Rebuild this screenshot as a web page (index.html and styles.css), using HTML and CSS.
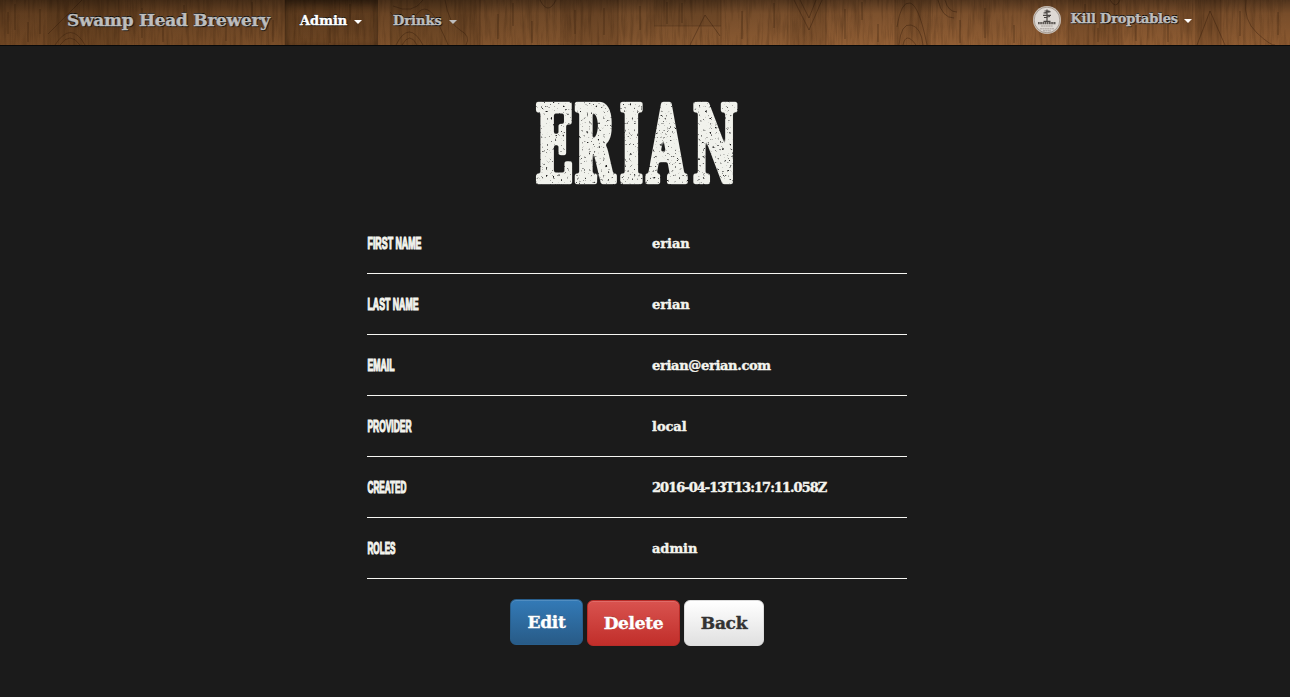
FILE: index.html
```html
<!DOCTYPE html>
<html lang="en">
<head>
<meta charset="utf-8">
<title>Swamp Head Brewery</title>
<link rel="stylesheet" href="styles.css">
</head>
<body>
<header class="navbar">
  <svg class="wood" width="1290" height="45" aria-hidden="true">
    <defs>
      <linearGradient id="tone"><stop offset="0" stop-color="#704724"/><stop offset=".22" stop-color="#794e29"/><stop offset=".5" stop-color="#855730"/><stop offset=".68" stop-color="#925f35"/><stop offset="1" stop-color="#8c5a31"/></linearGradient>
      <linearGradient id="shade" x2="0" y2="1"><stop offset="0" stop-opacity=".42"/><stop offset=".3" stop-opacity=".15"/><stop offset="1" stop-opacity="0"/></linearGradient>
      <filter id="grain" x="0" y="0" width="100%" height="100%" color-interpolation-filters="sRGB"><feTurbulence type="fractalNoise" baseFrequency=".3 .025" numOctaves="4" seed="8"/><feColorMatrix values="0 0 0 0 .16  0 0 0 0 .08  0 0 0 0 .02  2.2 0 0 0 -.95"/></filter>
    </defs>
    <rect width="1290" height="45" fill="url(#tone)"/>
    <g fill="#2a1505" fill-opacity=".12"><path d="M47 0h72v45H47zM390 0h90v45h-90zM560 0h58v45h-58zM654 0h67v26h-67zM790 0h36v45h-36zM895 0h36v45h-36zM1068 0h51v45h-51zM1195 0h26v45h-26z"/></g>
    <rect width="1290" height="45" filter="url(#grain)" opacity=".26"/>
    <g fill="none" stroke="#341b09" stroke-opacity=".4">
      <path d="M55 45q16-25 30 0M60 45q10-14 20 0M48 34q18-18 34-34M390 12q15 18 26 3t22 8 10 22M393 6q20 9 30-6M396 45q13-26 27 0M402 45q8-14 15 0M445 0q4 24 15 30t6 15M540 0q8 16 16 0M690 45l15-30 15 21M794 0l15 30 13-30M800 0l9 18 7-18M897 27q4-26 13-24t17 42M899 45q2-22 12-20t12 20M903 45q3-14 13 0M938 0q4 18 16 18M945 0q3 12 12 12M1110 0q6 10 10 0M1197 45l13-34 15 34M1246 0q-3 20 11 33t18 12"/>
      <path stroke-opacity=".25" d="M119 0v45M285 0v45M480 0v45M618 0v45M721 0v45M826 0v45M895 0v45M1119 0v45M1221 0v45M654 26h67"/>
      <path stroke-opacity=".45" d="M8 12v22M15 4v26M28 22v20M40 9v25M142 8v30M163 20v22M184 5v15M226 16v25M252 2v14M273 20v22M330 28v15M350 4v16M498 14v25M513 3v23M532 21v22M575 10v24M604 8v27M640 6v24M667 2v22M682 3v20M742 11v28M774 3v25M845 9v30M862 2v18M878 24v18M960 20v23M985 8v30M1014 25v18M1085 4v12M1098 28v14M1136 25v16M1168 22v20M1240 11v25M1278 12v23"/>
    </g>
    <rect width="1290" height="45" fill="url(#shade)"/>
  </svg>
  <nav class="bar">
    <a class="brand">Swamp Head Brewery</a>
    <a class="item active">Admin <i class="caret"></i></a>
    <a class="item">Drinks <i class="caret"></i></a>
    <a class="user">
      <svg class="avatar" viewBox="0 0 28 28" aria-hidden="true">
        <circle cx="14" cy="14" r="14" fill="#c9c0b8"/><circle cx="14" cy="14" r="12.8" fill="#ded9d4" stroke="#8b7d72" stroke-width=".6"/>
        <path d="M14 3.5v11.5M10.5 7l7-1.3M11.5 5h5M10 9.3h8M11 11.5l6-1M10.5 15.3h7" stroke="#4b4744" stroke-width="1.2"/>
        <path d="M5 17.2h18" stroke="#5c5753" stroke-width="2.2" stroke-dasharray="1.7 .5"/><path d="M8 20h12M7 22.8h14M10 24.8h8" stroke="#9b928b" stroke-width=".8" stroke-dasharray="2 .4"/>
      </svg>
      <span class="username">Kill Droptables</span><i class="caret light"></i>
    </a>
  </nav>
</header>
<main class="profile">
  <h1 class="title">
    <svg width="224" height="100" viewBox="0 0 224 100">
      <defs><filter id="letterpress" filterUnits="userSpaceOnUse" x="0" y="0" width="224" height="100">
        <feMorphology in="SourceGraphic" operator="dilate" radius="2 2"/>
        <feGaussianBlur stdDeviation=".9"/>
        <feComponentTransfer result="bold"><feFuncA type="linear" slope="3" intercept="-.8"/></feComponentTransfer>
        <feTurbulence type="fractalNoise" baseFrequency=".42" numOctaves="3" seed="5"/>
        <feColorMatrix values="0 0 0 0 0  0 0 0 0 0  0 0 0 0 0  0 0 0 -5 4.2" result="holes"/>
        <feComposite in="bold" in2="holes" operator="in"/>
      </filter></defs>
      <g filter="url(#letterpress)"><text class="title-text" transform="scale(.45 1)" x="20 106 207 269 370" y="87.5">ERIAN</text></g>
    </svg>
  </h1>
  <dl class="details">
    <div class="row"><dt><svg class="label"><text x="0.5" y="16" textLength="54" lengthAdjust="spacingAndGlyphs">FIRST NAME</text></svg></dt><dd>erian</dd></div>
    <div class="row"><dt><svg class="label"><text x="0.5" y="16" textLength="51" lengthAdjust="spacingAndGlyphs">LAST NAME</text></svg></dt><dd>erian</dd></div>
    <div class="row"><dt><svg class="label"><text x="0.5" y="16" textLength="27" lengthAdjust="spacingAndGlyphs">EMAIL</text></svg></dt><dd class="email">erian@erian.com</dd></div>
    <div class="row"><dt><svg class="label"><text x="0.5" y="16" textLength="44" lengthAdjust="spacingAndGlyphs">PROVIDER</text></svg></dt><dd>local</dd></div>
    <div class="row"><dt><svg class="label"><text x="0.5" y="16" textLength="39" lengthAdjust="spacingAndGlyphs">CREATED</text></svg></dt><dd class="date">2016-04-13T13:17:11.058Z</dd></div>
    <div class="row"><dt><svg class="label"><text x="0.5" y="16" textLength="28" lengthAdjust="spacingAndGlyphs">ROLES</text></svg></dt><dd>admin</dd></div>
  </dl>
  <div class="actions">
    <button class="btn edit">Edit</button>
    <button class="btn delete">Delete</button>
    <button class="btn back">Back</button>
  </div>
</main>
</body>
</html>
```
FILE: styles.css
```css
* { box-sizing: border-box; }
body { margin: 0; height: 697px; overflow: hidden; background: #1b1b1b; color: #f4f4ee; font: bold 13px "DejaVu Serif", serif; -webkit-text-stroke: .4px; }
.navbar { display: grid; height: 46px; border-bottom: 1px solid #090909; }
.wood, .bar { grid-area: 1 / 1; }
.wood { display: block; }
.bar { position: relative; display: flex; height: 45px; padding-left: 67px; color: #bdbdbd; line-height: 40px; text-shadow: 0 -1px 0 #000, 1px 1px 1px #111; }
.brand { width: 218px; font-size: 17px; letter-spacing: -.28px; white-space: nowrap; }
.item { display: flex; align-items: center; gap: 7px; width: 93px; height: 45px; padding: 0 0 4px 15px; letter-spacing: 0; }
.active { color: #fff; background: rgba(30, 12, 0, .14); box-shadow: inset 0 3px 9px rgba(0, 0, 0, .4); }
.caret { width: 0; height: 0; margin-top: 3px; border: 4px solid transparent; border-top-color: currentColor; border-bottom: 0; }
.light { color: #fff; margin-left: 6px; }
.user { display: flex; align-items: center; height: 38px; margin-left: auto; padding-right: 98px; }
.avatar { width: 28px; height: 28px; margin: 1px 9px 0 0; }
.username { font-size: 13px; letter-spacing: -.2px; }
.profile { width: 540px; margin-left: 367px; }
.title { height: 167px; margin: 0; padding: 48px 0 0 160px; }
.title svg { display: block; -webkit-text-stroke: 0; }
.title-text { font: bold 106px "DejaVu Serif", serif; fill: #f1f2ec; }
.details { margin: 0; }
.row { display: grid; grid-template-columns: 285px 255px; height: 61px; padding-top: 20px; border-bottom: 1px solid #f6f6f2; }
.row dt, .row dd { margin: 0; }
.row dd { line-height: 21px; letter-spacing: -.05px; }
.row .email { letter-spacing: -.33px; }
.row .date { letter-spacing: -.98px; }
.label { display: block; width: 120px; height: 20px; overflow: visible; fill: #f3f4ee; stroke: #f3f4ee; stroke-width: 1.2px; font: bold 16px "Liberation Sans", sans-serif; -webkit-text-stroke: 1.2px #f3f4ee; }
.actions { display: flex; gap: 4px; padding: 20px 0 0 143px; }
.btn { height: 46px; margin: 1px 0 0; padding: 0; border: 1px solid; border-radius: 6px; font: bold 17px "DejaVu Serif", serif; letter-spacing: -.3px; -webkit-text-stroke: .4px; box-shadow: inset 0 1px 0 rgba(255, 255, 255, .15); }
.edit { width: 73px; margin: 0 0 1px; color: #fff; background: linear-gradient(#337ab7, #285b87); border-color: #285e8c; text-shadow: 0 -1px 0 rgba(0, 0, 0, .2); }
.delete { width: 93px; color: #fff; background: linear-gradient(#d9534f, #c12e2a); border-color: #b92c28; text-shadow: 0 -1px 0 rgba(0, 0, 0, .2); }
.back { width: 80px; color: #333; background: linear-gradient(#fff, #e0e0e0); border-color: #ddd; text-shadow: 0 1px 0 #fff; }
```
